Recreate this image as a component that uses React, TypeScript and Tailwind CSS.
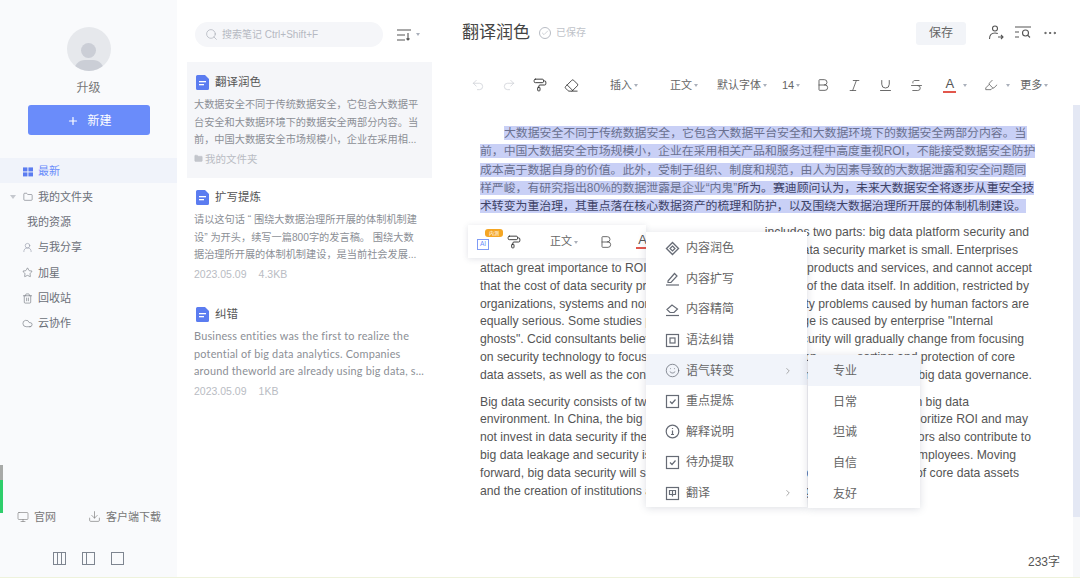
import React from "react";
import {
  Undo2, Redo2, PaintRoller, Eraser, Bold, Italic, Underline, Strikethrough, Search, ChevronRight, Smile,
  Star, Trash2, Cloud, Folder, UserRound, Monitor, Download, Plus, Ellipsis, Check, Highlighter,
} from "lucide-react";

const SANS = "font-['Liberation_Sans','Noto_Sans_CJK_SC',sans-serif]";

function Caret() {
  return <span className="ml-[2px] inline-block h-0 w-0 border-x-[2.5px] border-t-[3px] border-x-transparent border-t-[#aab0bb] align-middle" />;
}

function DocIcon() {
  return (
    <svg width="13" height="15" viewBox="0 0 13 15" className="shrink-0">
      <path d="M1.500 0H9l4 4v9.500A1.500 1.500 0 0 1 11.500 15h-10A1.500 1.500 0 0 1 0 13.500v-12A1.500 1.500 0 0 1 1.500 0z" fill="#5b7cf0" />
      <rect x="3" y="6" width="7" height="1.300" fill="#fff" />
      <rect x="3" y="9" width="5" height="1.300" fill="#fff" />
    </svg>
  );
}

function GridIcon() {
  return (
    <svg width="10" height="10" viewBox="0 0 12 11" fill="#5b7cf0">
      <rect width="5.300" height="4.800" /><rect x="6.500" width="5.500" height="4.800" />
      <rect y="6" width="5.300" height="4.800" /><rect x="6.500" y="6" width="5.500" height="4.800" />
    </svg>
  );
}

const stroke = { fill: "none", stroke: "#666b75", strokeWidth: 1.2 };

function Diamond() {
  return <svg width="15" height="15" viewBox="0 0 15 15" {...stroke}><path d="M7.500 1.500 13.500 7.500 7.500 13.500 1.500 7.500z" strokeWidth="1.400" /><path d="M7.500 5 10 7.500 7.500 10 5 7.500z" fill="#fff" /></svg>;
}
function Pencil() {
  return <svg width="15" height="15" viewBox="0 0 15 15" {...stroke}><path d="M3 10 9.500 2.500 12 5 6 11.500H3z" /><path d="M1 14h13" /></svg>;
}
function EraserLine() {
  return <svg width="15" height="15" viewBox="0 0 15 15" {...stroke}><path d="M2 7.500 7 3l5.500 4-3.500 3.500H5z" /><path d="M1 13.500h13" /></svg>;
}
function BoxA() {
  return <svg width="15" height="15" viewBox="0 0 15 15" {...stroke}><rect x="1.500" y="1.500" width="12" height="12" /><rect x="5" y="5" width="5" height="5" /></svg>;
}
function BoxCheck() {
  return <svg width="15" height="15" viewBox="0 0 15 15" {...stroke}><rect x="1.500" y="1.500" width="12" height="12" /><path d="m5 7.500 2 2 3.500-4" /></svg>;
}
function CircleI() {
  return <svg width="15" height="15" viewBox="0 0 15 15" {...stroke}><circle cx="7.500" cy="7.500" r="6.300" /><path d="M7.500 6.500v4M6 10.500h3M7.500 4v1" /></svg>;
}
function BoxT() {
  return <svg width="15" height="15" viewBox="0 0 15 15" {...stroke}><rect x="1.500" y="1.500" width="12" height="12" /><path d="M4.500 4.500h6v4h-6zM7.500 4.500v6" /></svg>;
}

const nav: { label: string; icon?: React.ReactNode; active?: boolean; className: string }[] = [
  { label: "最新", icon: <GridIcon />, active: true, className: "pl-[23px]" },
  { label: "我的文件夹", icon: <Folder size={10} strokeWidth={1.400} />, className: "pl-[23px]" },
  { label: "我的资源", className: "pl-[27px]" },
  { label: "与我分享", icon: <UserRound size={11} strokeWidth={1.200} color="#8a8fa0" />, className: "pl-[22px]" },
  { label: "加星", icon: <Star size={11} strokeWidth={1.300} />, className: "pl-[22px]" },
  { label: "回收站", icon: <Trash2 size={11} strokeWidth={1.300} />, className: "pl-[22px]" },
  { label: "云协作", icon: <Cloud size={11} strokeWidth={1.300} />, className: "pl-[22px]" },
];

function Sidebar() {
  return (
    <aside className="flex h-full w-[177px] shrink-0 flex-col items-stretch bg-[#f9fafc]">
      <div className="mt-[27px] flex flex-col items-center">
        <div className="flex h-[44px] w-[44px] flex-col items-center justify-end overflow-hidden rounded-full bg-[#e6e8ec]">
          <div className="mb-[2px] h-[15px] w-[15px] rounded-full bg-[#cbced6]" />
          <div className="h-[11px] w-[30px] rounded-t-full bg-[#cbced6]" />
        </div>
        <div className="mt-[9px] text-[12px] leading-[16px] text-[#777]">升级</div>
        <button className="mt-[9px] flex h-[30px] w-[122px] items-center justify-center gap-[8px] rounded-[3px] bg-[#6a8cfa] pl-[2px] pt-[1px] text-[12px] text-white">
          <Plus size={12} strokeWidth={2.400} /> 新建
        </button>
      </div>
      <nav className="mt-[23px] flex flex-col text-[11px] text-[#6b6f78]">
        {nav.map((n, i) => (
          <div key={n.label} className={`relative flex h-[25.300px] items-center gap-[5px] pt-[2px] ${n.className} ${n.active ? "bg-[#f0f3fa] text-[#6a8cfa]" : ""}`}>
            {i === 1 && <span className="absolute left-[10px] top-[12px] h-0 w-0 border-x-[3px] border-t-[4px] border-x-transparent border-t-[#c5c8ce]" />}
            {n.icon}
            <span>{n.label}</span>
          </div>
        ))}
      </nav>
      <div className="mt-auto flex items-center justify-between pl-[17px] pr-[16px] text-[11px] text-[#777]">
        <span className="flex items-center gap-[5px]"><Monitor size={12} strokeWidth={1.200} />官网</span>
        <span className="flex items-center gap-[5px]"><Download size={13} strokeWidth={1.200} />客户端下载</span>
      </div>
      <div className="mb-[13px] mt-[27px] flex justify-center gap-[16px] text-[#7e8590]">
        {[2, 1, 0].map((c) => (
          <span key={c} className="flex h-[13px] w-[13px] border border-[#7e8590]">
            {c >= 1 && <span className="h-full w-[4px] border-r border-[#7e8590]" />}
            {c === 2 && <span className="h-full w-[4px] border-r border-[#7e8590]" />}
          </span>
        ))}
      </div>
    </aside>
  );
}

const notes = [
  { title: "翻译润色", lines: ["大数据安全不同于传统数据安全，它包含大数据平", "台安全和大数据环境下的数据安全两部分内容。当", "前，中国大数据安全市场规模小，企业在采用相..."], meta: "folder", selected: true },
  { title: "扩写提炼", lines: ["请以这句话 “ 围绕大数据治理所开展的体制机制建", "设” 为开头，续写一篇800字的发言稿。 围绕大数", "据治理所开展的体制机制建设，是当前社会发展..."], meta: "4.3KB" },
  { title: "纠错", lines: ["Business entities was the first to realize the", "potential of big data analytics. Companies", "around theworld are already using big data, s..."], meta: "1KB", latin: true },
];

function NoteList() {
  return (
    <section className="flex h-full w-[265px] shrink-0 flex-col pl-[10px] pr-[10px]">
      <div className="mt-[22px] flex items-center pl-[8px]">
        <div className="flex h-[25px] w-[188px] items-center gap-[4px] rounded-full bg-[#f5f6f9] pl-[10px] text-[10px] text-[#b5b9c2]">
          <Search size={13} strokeWidth={1.100} color="#9da2ac" />
          <span>搜索笔记 Ctrl+Shift+F</span>
        </div>
        <span className="ml-[14px] flex items-center gap-[3px]">
          <svg width="14" height="12" viewBox="0 0 14 12" fill="none" stroke="#555" strokeWidth="1.100"><path d="M0 1h14M0 6h8M0 11h8M11 4v7M9.500 9.500 11 11l1.500-1.500" /></svg>
          <Caret />
        </span>
      </div>
      <div className="mt-[15px] flex flex-col">
        {notes.map((n) => (
          <article key={n.title} className={`${n.selected ? "h-[116px] bg-[#f5f6f9] pt-[13px]" : "h-[117px] pt-[12px]"} pl-[7px]`}>
            <div className="flex h-[15px] items-center gap-[6px] pl-[2px] text-[11.500px] text-[#555]"><DocIcon /><span className="pt-[1px]">{n.title}</span></div>
            <div className={`text-[#8c8f96] ${n.latin ? "mt-[5px] font-['Lato','Noto_Sans_CJK_SC',sans-serif] text-[10.900px] tracking-[0.2px]" : "mt-[6px] text-[10.200px]"} leading-[17.500px]`}>
              {n.lines.map((l) => <div key={l} className="whitespace-nowrap">{l}</div>)}
            </div>
            <div className={`${n.latin ? "mt-[3px]" : "mt-[2px]"} flex items-center gap-[12px] text-[10.500px] leading-[16px] text-[#b9bcc3]`}>
              {n.meta === "folder" ? (
                <span className="flex items-center gap-[2px]"><Folder size={9} fill="#c3c6cc" strokeWidth={1} />我的文件夹</span>
              ) : (
                <><span>2023.05.09</span><span>{n.meta}</span></>
              )}
            </div>
          </article>
        ))}
      </div>
    </section>
  );
}

function ToolGroup({ children, className = "" }: { children: React.ReactNode; className?: string }) {
  return <span className={`flex items-center ${className}`}>{children}</span>;
}

function FontColor() {
  return (
    <span className="flex w-[13px] flex-col items-center text-[13px] leading-[12px] text-[#555]">
      A<span className="mt-[1px] h-[2px] w-[13px] bg-[#e2574c]" />
    </span>
  );
}

function TopBar() {
  return (
    <header className="flex h-[65px] items-center pl-[20px] pr-[22px]">
      <h1 className="pt-[1px] text-[17px] font-normal text-[#444]">翻译润色</h1>
      <span className="ml-[9px] flex items-center gap-[5px] text-[10px] text-[#c0c3c9]">
        <span className="flex h-[12px] w-[12px] items-center justify-center rounded-full border border-[#b8bcc4]"><Check size={8} color="#b8bcc4" /></span>
        已保存
      </span>
      <button className="ml-auto mt-[1px] flex h-[23px] w-[50px] items-center justify-center rounded-[3px] bg-[#f2f4f8] text-[12px] text-[#666]">保存</button>
      <span className="ml-[22px] flex items-center gap-[11px] text-[#555]">
        <svg width="16" height="15" viewBox="0 0 16 15" fill="none" stroke="#555" strokeWidth="1.100"><circle cx="7" cy="3.500" r="2.500" /><path d="M1.500 14c0-4 2-6 5.500-6 1 0 2 .2 2.800.6M10 12h5M13 10l2 2-2 2" /></svg>
        <svg width="16" height="13" viewBox="0 0 16 13" fill="none" stroke="#555" strokeWidth="1.100"><path d="M0 1h16M0 6h4M0 11h4" /><circle cx="10.500" cy="7" r="3" /><path d="m13 9.500 2 2" /></svg>
        <Ellipsis size={16} strokeWidth={1.500} />
      </span>
    </header>
  );
}

function Toolbar() {
  return (
    <div className="flex h-[40px] items-center pl-[29px] text-[11px] text-[#666]">
      <ToolGroup className="gap-[17px]">
        <Undo2 size={14} strokeWidth={1.200} color="#c8ccd3" />
        <Redo2 size={14} strokeWidth={1.200} color="#c8ccd3" />
        <PaintRoller size={14} strokeWidth={1.600} color="#333" />
        <Eraser size={15} strokeWidth={1.400} color="#333" />
      </ToolGroup>
      <span className="ml-[31px]">插入<Caret /></span>
      <span className="ml-[32px]">正文<Caret /></span>
      <span className="ml-[19px]">默认字体<Caret /></span>
      <span className="ml-[15px]">14<Caret /></span>
      <ToolGroup className="ml-[15px] gap-[16px]">
        <Bold size={16} strokeWidth={1.300} color="#555" />
        <Italic size={15} strokeWidth={1.300} color="#555" />
        <Underline size={15} strokeWidth={1.400} color="#555" />
        <Strikethrough size={15} strokeWidth={1.300} color="#555" />
      </ToolGroup>
      <span className="ml-[19px]"><FontColor /></span>
      <span className="ml-[5px]"><Caret /></span>
      <span className="ml-[17px]"><Highlighter size={14} strokeWidth={1.300} color="#555" /></span>
      <span className="ml-[6px]"><Caret /></span>
      <span className="ml-[10px]">更多<Caret /></span>
    </div>
  );
}

const hl = "bg-[#c9d0f6]";

type Line = { left: string; right?: string; pad?: string };

const p1: Line[] = [
  { left: "Big data security is different", right: "includes two parts: big data platform security and", pad: "pr-[4px]" },
  { left: "big data environment security. At present,", right: "big data security market is small. Enterprises", pad: "pr-[15px]" },
  { left: "attach great importance to ROI in the process", right: "relevant products and services, and cannot accept", pad: "pr-[1px]" },
  { left: "that the cost of data security protection is higher", right: "value of the data itself. In addition, restricted by", pad: "pr-[4px]" },
  { left: "organizations, systems and norms, big data leakage", right: "security problems caused by human factors are", pad: "pr-[4px]" },
  { left: "equally serious. Some studies point out that 80% of", right: "leakage is caused by enterprise \"Internal", pad: "pr-[40px]" },
  { left: "ghosts\". Ccid consultants believe that in the", right: "data security will gradually change from focusing", pad: "pr-[9px]" },
  { left: "on security technology to focusing on governance, focusing on", right: "sorting and protection of core", pad: "pr-[18px]" },
  { left: "data assets, as well as the construction of institutions and", right: "mechanisms around big data governance.", pad: "pr-[1px]" },
];
const p2: Line[] = [
  { left: "Big data security consists of two parts: big data platform", right: "security in big data", pad: "pr-[64px]" },
  { left: "environment. In China, the big data security market is small", right: "prioritize ROI and may", pad: "pr-[5px]" },
  { left: "not invest in data security if the cost is higher than the value", right: "Human factors also contribute to", pad: "pr-[2px]" },
  { left: "big data leakage and security issues, with up to 80% of data", right: "caused by employees. Moving", pad: "pr-[17px]" },
  { left: "forward, big data security will shift to focus on", right: "sorting and protection of core data assets", pad: "pr-[14px]" },
  { left: "and the creation of institutions and mechanisms for big data governance." },
];

function TextLine({ line }: { line: Line }) {
  return (
    <div className="flex w-[553px] justify-between whitespace-nowrap">
      <span>{line.left}</span>
      {line.right && <span className={`shrink-0 pl-[4px] ${line.pad}`}>{line.right}</span>}
    </div>
  );
}

function DocBody() {
  return (
    <div className={`pl-[38px] pt-[19px] ${SANS} text-[12.200px] text-[#555]`}>
      <div className="whitespace-nowrap text-[11.880px] leading-[18.300px] text-[#6a7090]">
        <div className="pl-[24px]"><span className={hl}>大数据安全不同于传统数据安全，它包含大数据平台安全和大数据环境下的数据安全两部分内容。当</span></div>
        <div><span className={hl}>前，中国大数据安全市场规模小，企业在采用相关产品和服务过程中高度重视ROI，不能接受数据安全防护</span></div>
        <div><span className={hl}>成本高于数据自身的价值。此外，受制于组织、制度和规范，由人为因素导致的大数据泄露和安全问题同</span></div>
        <div><span className={hl}>样严峻，有研究指出80%的数据泄露是企业“内鬼”<span className="text-[#3d4266]">所为。赛迪顾问认为，未来大数据安全将逐步从重安全技</span></span></div>
        <div className="text-[#3d4266]"><span className={hl}>术转变为重治理，其重点落在核心数据资产的梳理和防护，以及围绕大数据治理所开展的体制机制建设。</span></div>
      </div>
      <div className="mt-[9px] leading-[17.800px]">
        {p1.map((l) => <TextLine key={l.left} line={l} />)}
      </div>
      <div className="mt-[9px] leading-[17.800px]">
        {p2.map((l) => <TextLine key={l.left} line={l} />)}
      </div>
    </div>
  );
}

const menu: { label: string; icon: React.ReactNode; arrow?: boolean; active?: boolean }[] = [
  { label: "内容润色", icon: <Diamond /> },
  { label: "内容扩写", icon: <Pencil /> },
  { label: "内容精简", icon: <EraserLine /> },
  { label: "语法纠错", icon: <BoxA /> },
  { label: "语气转变", icon: <Smile size={15} strokeWidth={1.200} color="#666b75" />, arrow: true, active: true },
  { label: "重点提炼", icon: <BoxCheck /> },
  { label: "解释说明", icon: <CircleI /> },
  { label: "待办提取", icon: <BoxCheck /> },
  { label: "翻译", icon: <BoxT />, arrow: true },
];

function Overlays() {
  return (
    <>
      <div className="absolute left-[468px] top-[225px] flex h-[33px] w-[178px] items-center whitespace-nowrap bg-white pl-[9px] text-[11px] text-[#666] shadow-[0_1px_6px_rgba(60,70,100,0.16)]">
        <span className="relative mt-[5px] flex h-[11px] w-[12px] shrink-0 items-center justify-center border border-[#7f9bf5] text-[6.500px] leading-none text-[#6a8cfa]">
          AI
          <span className="absolute -top-[11px] left-[7px] w-[18px] whitespace-nowrap rounded-[3px] bg-[#f5a623] text-center text-[5px] leading-[8px] text-white">内测</span>
        </span>
        <PaintRoller size={14} strokeWidth={1.600} color="#333" className="ml-[18px] shrink-0" />
        <span className="ml-[29px] shrink-0">正文<Caret /></span>
        <Bold size={16} strokeWidth={1.300} color="#555" className="ml-[20px] shrink-0" />
        <span className="ml-[22px] shrink-0"><FontColor /></span>
      </div>
      <div className="absolute left-[646px] top-[232px] w-[161px] bg-white text-[12px] text-[#666] shadow-[0_1px_8px_rgba(60,70,100,0.18)]">
        {menu.map((m) => (
          <div key={m.label} className={`flex h-[30.600px] items-center gap-[6px] pl-[19px] pr-[14px] pt-[2px] ${m.active ? "bg-[#f1f4fa]" : ""}`}>
            {m.icon}
            <span>{m.label}</span>
            {m.arrow && <ChevronRight size={10} color="#999" className="ml-auto" />}
          </div>
        ))}
      </div>
      <div className="absolute left-[808px] top-[355px] w-[112px] bg-white text-[12px] text-[#666] shadow-[0_1px_8px_rgba(60,70,100,0.18)]">
        {["专业", "日常", "坦诚", "自信", "友好"].map((s, i) => (
          <div key={s} className={`flex h-[30.600px] items-center pl-[25px] pt-[2px] ${i === 0 ? "bg-[#f1f4fa]" : ""}`}>{s}</div>
        ))}
      </div>
      <span className="absolute left-0 top-[465px] flex h-[48px] w-[3px] flex-col">
        <span className="h-[15px] bg-[#a8aaa8]" />
        <span className="flex-1 bg-[#2fce6b]" />
      </span>
      <span className="absolute right-[20px] top-[554px] text-[12px] leading-[16px] text-[#555]">233字</span>
      <span className="absolute inset-x-0 bottom-0 h-[1px] bg-[#eef2dc]" />
    </>
  );
}

export default function App() {
  return (
    <div className={`relative flex h-[578px] w-[1080px] overflow-hidden bg-white ${SANS}`}>
      <Sidebar />
      <NoteList />
      <main className="relative flex min-w-0 flex-1 flex-col overflow-hidden">
        <TopBar />
        <Toolbar />
        <DocBody />
        <div className="absolute bottom-0 right-0 top-[105px] w-[7px] bg-[#f7f8fa]">
          <div className="h-[412px] w-full bg-[#e4e8f4]" />
        </div>
      </main>
      <Overlays />
    </div>
  );
}
